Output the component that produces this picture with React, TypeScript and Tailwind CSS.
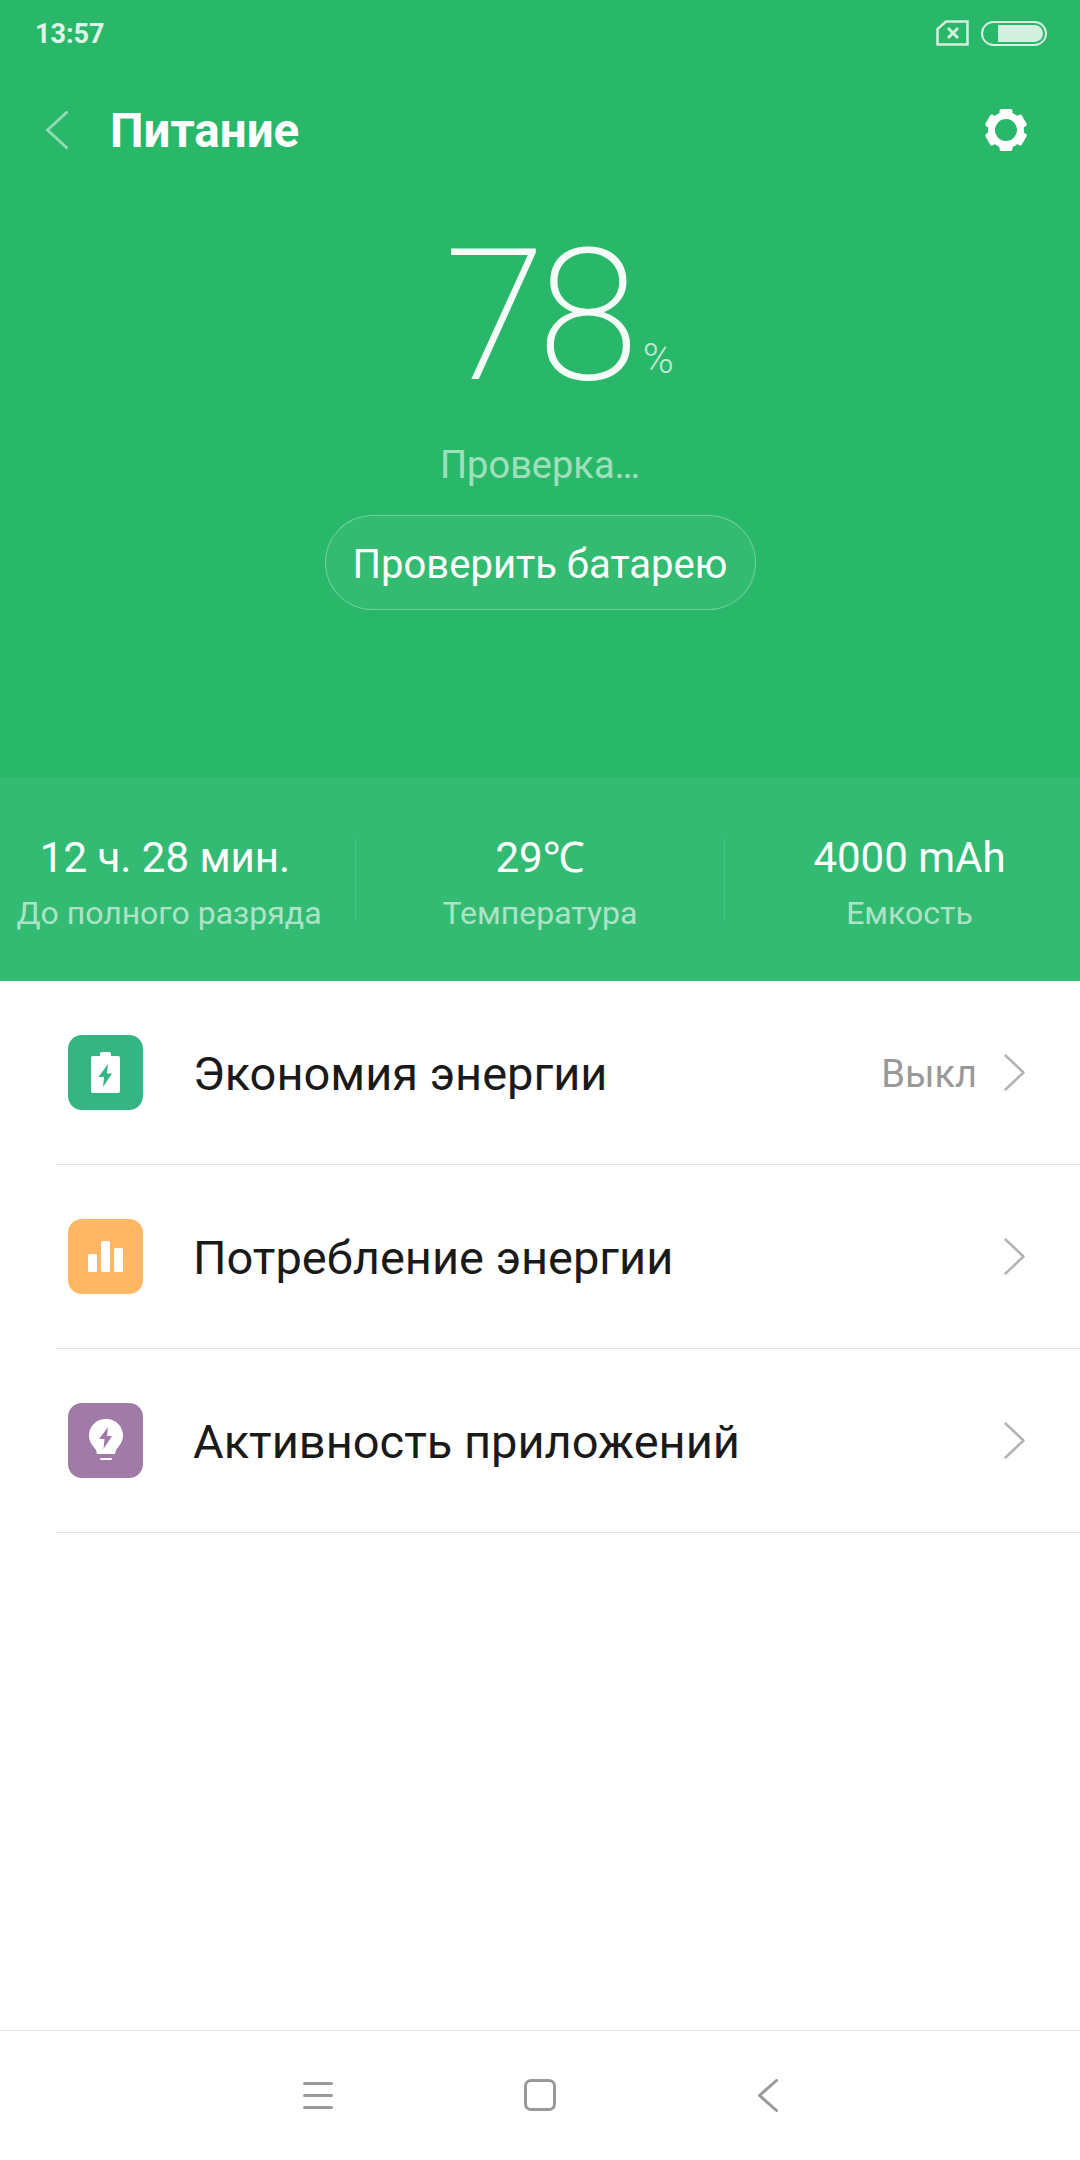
function Gear() {
  return (
    <svg width="44" height="44" viewBox="0 0 44 44">
      <circle cx="22" cy="22" r="14.5" fill="none" stroke="#fff" strokeWidth="7" />
      {[0, 60, 120, 180, 240, 300].map((a) => (
        <rect key={a} x="15.5" y="1" width="13" height="10" rx="2" fill="#fff" transform={`rotate(${a} 22 22)`} />
      ))}
    </svg>
  );
}

function Chevron({ w, h, color, sw, right }: { w: number; h: number; color: string; sw: number; right?: boolean }) {
  const d = right
    ? `M1.5 1.5 L${w - 1.5} ${h / 2} L1.5 ${h - 1.5}`
    : `M${w - 1.5} 1.5 L1.5 ${h / 2} L${w - 1.5} ${h - 1.5}`;
  return (
    <svg width={w} height={h} viewBox={`0 0 ${w} ${h}`} fill="none">
      <path d={d} stroke={color} strokeWidth={sw} strokeLinecap="round" strokeLinejoin="round" />
    </svg>
  );
}

function Row({ title, value, bg, icon }: { title: string; value?: string; bg: string; icon: React.ReactNode }) {
  return (
    <div className="ml-[55px] h-[184px] flex items-center border-b border-[#e6e6e6] pr-[55px]">
      <div className={`ml-[13px] w-[75px] h-[75px] rounded-[14px] flex items-center justify-center ${bg}`}>{icon}</div>
      <div className="ml-[50px] pt-[2px] flex-1 text-[47px] leading-[56px] text-[#1a1a1a]">{title}</div>
      {value && <div className="mr-[27px] pt-[2px] text-[38px] leading-[44px] text-[#999999]">{value}</div>}
      <Chevron w={21} h={37} color="#b3b3b3" sw={2.5} right />
    </div>
  );
}

function Stat({ value, label, className, valueClass }: { value: string; label: string; className: string; valueClass?: string }) {
  return (
    <div className={`flex flex-col items-center ${className}`}>
      <div className={`text-[42px] leading-[48px] text-white whitespace-nowrap ${valueClass ?? ""}`}>{value}</div>
      <div className="mt-[11px] text-[32px] leading-[40px] text-white/60 whitespace-nowrap">{label}</div>
    </div>
  );
}

export default function App() {
  return (
    <div className="w-[1080px] h-[2160px] bg-white flex flex-col font-['Roboto','Noto_Sans',sans-serif]">
      <div className="h-[778px] bg-[#29b86a] flex flex-col">
        <div className="h-[66px] pl-[35px] pr-[33px] flex items-center justify-between">
          <span className="pt-[2px] text-[27px] leading-[32px] font-bold text-white/85">13:57</span>
          <div className="flex items-center gap-[12px]">
            <svg width="33" height="26" viewBox="0 0 33 26" fill="none" stroke="#d4f0e0" strokeWidth="2.5">
              <path d="M10 1.5 H31.5 V24.5 H1.5 V9 Z" />
              <path d="M12 8 L22 18 M22 8 L12 18" strokeWidth="3" />
            </svg>
            <div className="w-[66px] h-[25px] rounded-full border-2 border-[#d4f0e0] p-[2px] pl-[15px]">
              <div className="h-full bg-[#d4f0e0] rounded-r-full" />
            </div>
          </div>
        </div>
        <div className="h-[128px] pl-[46px] pr-[52px] flex items-center">
          <Chevron w={22} h={38} color="#8fdcb2" sw={3} />
          <span className="ml-[42px] pt-[2px] flex-1 text-[47.5px] leading-[56px] font-bold text-white">Питание</span>
          <Gear />
        </div>
        <div className="mt-[30px] flex justify-center items-end pl-[38px]">
          <span className="text-[184px] leading-[184px] font-extralight text-white/95 tracking-[-8px]">78</span>
          <span className="ml-[12px] mb-[27px] text-[42px] leading-[44px] font-light text-white/70">%</span>
        </div>
        <div className="mt-[35px] text-center text-[38px] leading-[44px] text-white/55">Проверка…</div>
        <div className="mt-[28px] self-center w-[431px] h-[95px] rounded-full border border-white/30 bg-white/5 flex items-center justify-center pt-[5px] text-[40px] leading-[48px] text-white">
          Проверить батарею
        </div>
      </div>
      <div className="h-[203px] bg-[#34bb73] border-t border-[#3fc07b] flex items-start pt-[59px]">
        <Stat value="12 ч. 28 мин." label="До полного разряда" className="w-[338px] -mt-[4px]" valueClass="pr-[8px]" />
        <div className="ml-[17px] w-px h-[83px] bg-white/10" />
        <Stat value="29℃" label="Температура" className="w-[368px] -mt-[4px]" />
        <div className="w-px h-[83px] bg-white/10" />
        <Stat value="4000 mAh" label="Емкость" className="flex-1 pl-[14px] -mt-[4px]" />
      </div>
      <Row
        title="Экономия энергии"
        value="Выкл"
        bg="bg-[#35b584]"
        icon={
          <svg width="29" height="41" viewBox="0 0 29 41">
            <path d="M9 2 a2 2 0 0 1 2 -2 h7 a2 2 0 0 1 2 2 v2 h7 a2 2 0 0 1 2 2 v33 a2 2 0 0 1 -2 2 h-25 a2 2 0 0 1 -2 -2 v-33 a2 2 0 0 1 2 -2 h7 z" fill="#fff" />
            <path d="M17 12 L7.5 25 H13 L12 35 L21 21.5 H16 Z" fill="#35b584" />
          </svg>
        }
      />
      <Row
        title="Потребление энергии"
        bg="bg-[#ffb766]"
        icon={
          <svg width="35" height="31" viewBox="0 0 35 31" fill="#fff">
            <rect x="0" y="13" width="9" height="18" rx="1.5" />
            <rect x="13" y="0" width="9" height="31" rx="1.5" />
            <rect x="26" y="7" width="9" height="24" rx="1.5" />
          </svg>
        }
      />
      <Row
        title="Активность приложений"
        bg="bg-[#a07ba8]"
        icon={
          <svg width="34" height="44" viewBox="0 0 34 44">
            <path d="M17 0 C7 0 0 7.5 0 16.5 C0 23 4 27 7 31 L8 35 H26 L27 31 C30 27 34 23 34 16.5 C34 7.5 27 0 17 0 Z" fill="#fff" />
            <rect x="11" y="39" width="12" height="2" rx="1" fill="#fff" />
            <path d="M19 8 L10 20 H15.5 L14.5 30 L23 17 H18 Z" fill="#a07ba8" />
          </svg>
        }
      />
      <div className="flex-1" />
      <div className="h-[130px] border-t border-[#e6e6e6] flex items-start pt-[48px]">
        <div className="ml-[303px] w-[30px] h-[27px] flex flex-col justify-between mt-[3px]">
          <div className="h-[3px] rounded-full bg-[#999999]" />
          <div className="h-[3px] rounded-full bg-[#999999]" />
          <div className="h-[3px] rounded-full bg-[#999999]" />
        </div>
        <div className="ml-[191px] w-[32px] h-[32px] rounded-[7px] border-[3px] border-[#999999]" />
        <div className="ml-[202px]">
          <Chevron w={20} h={33} color="#999999" sw={3} />
        </div>
      </div>
    </div>
  );
}
